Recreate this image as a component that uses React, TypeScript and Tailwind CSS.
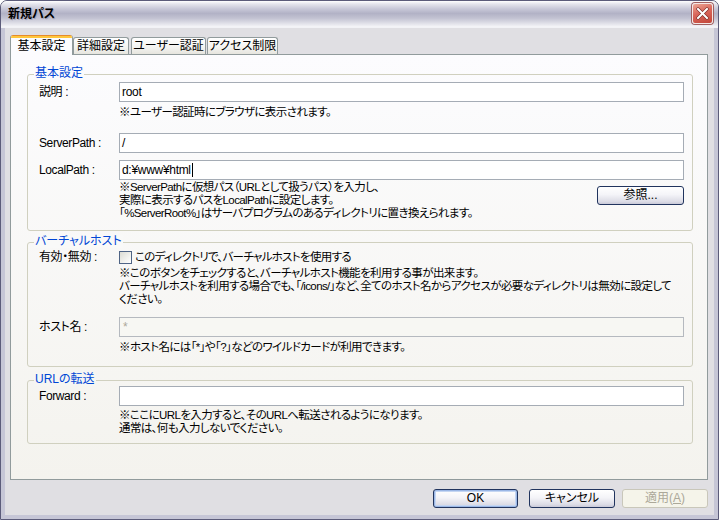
import React from "react";

const font =
  "font-['Liberation_Sans','Noto_Sans_CJK_JP',sans-serif] [font-feature-settings:'palt']";

function CloseButton() {
  return (
    <div className="flex h-[21px] w-[21px] items-center justify-center rounded-[3px] border border-[#f4e8e6] bg-[linear-gradient(160deg,#eba896_0%,#d9665a_45%,#c2463a_100%)] shadow-[0_0_0_1px_#a06060]">
      <svg width="13" height="13" viewBox="0 0 13 13">
        <path d="M2 2 L11 11 M11 2 L2 11" stroke="#7a2a24" strokeWidth="3.2" strokeLinecap="square" />
        <path d="M2 2 L11 11 M11 2 L2 11" stroke="#ffffff" strokeWidth="2" strokeLinecap="square" />
      </svg>
    </div>
  );
}

function Tab({ label, selected, width }: { label: string; selected?: boolean; width: string }) {
  if (selected) {
    return (
      <div
        className={`relative z-10 mb-[-1px] flex h-[20px] ${width} flex-col overflow-hidden rounded-t-[3px] border-x border-[#919b9c] bg-[#fcfcfe]`}
      >
        <div className="h-[1px] bg-[#e68b2c]" />
        <div className="h-[2px] bg-[#ffc73c]" />
        <div className="flex flex-1 items-center justify-center pb-[1px] text-[12px]">{label}</div>
      </div>
    );
  }
  return (
    <div
      className={`flex h-[17px] ${width} items-center justify-center rounded-t-[3px] border-x border-t border-[#919b9c] bg-[linear-gradient(180deg,#ffffff_0%,#f3f3f0_60%,#e6e5de_100%)] text-[12px]`}
    >
      {label}
    </div>
  );
}

function Group({
  title,
  labelBg,
  className,
  children,
}: {
  title: string;
  labelBg: string;
  className: string;
  children: React.ReactNode;
}) {
  return (
    <div className={`relative rounded-[3px] border border-[#d0d0bf] pl-[11px] pr-[8px] ${className}`}>
      <span className={`absolute left-[6px] top-[-8px] px-[1px] leading-[13px] text-[#0046d5] ${labelBg}`}>
        {title}
      </span>
      {children}
    </div>
  );
}

function Row({ label, children, className = "" }: { label: string; children: React.ReactNode; className?: string }) {
  return (
    <div className={`flex items-center ${className}`}>
      <div className="w-[80px] shrink-0 whitespace-nowrap tracking-[-0.4px]">{label}</div>
      <div className="flex-1">{children}</div>
    </div>
  );
}

function TextBox({ value, cursor }: { value: string; cursor?: boolean }) {
  return (
    <div className="flex h-[20px] items-center border border-[#a5acb5] bg-white pl-[2px] tracking-[-0.3px]">
      <span>{value}</span>
      {cursor && <span className="ml-[1px] inline-block h-[14px] w-[1px] bg-black" />}
    </div>
  );
}

function Note({ lines, className = "" }: { lines: string[]; className?: string }) {
  return (
    <div className={`ml-[80px] whitespace-nowrap text-[11.5px] leading-[13px] tracking-[-0.6px] ${className}`}>
      {lines.map((l) => (
        <div key={l}>{l}</div>
      ))}
    </div>
  );
}

function XpButton({
  label,
  width,
  isDefault,
  disabled,
  className = "",
}: {
  label: React.ReactNode;
  width: string;
  isDefault?: boolean;
  disabled?: boolean;
  className?: string;
}) {
  if (disabled) {
    return (
      <div
        className={`flex h-[19px] ${width} items-center justify-center rounded-[3px] border border-[#c9c7ba] bg-[#f5f4ea] text-[#aca899] ${className}`}
      >
        {label}
      </div>
    );
  }
  return (
    <div
      className={`flex h-[19px] ${width} items-center justify-center rounded-[3px] border border-[#21345e] bg-[linear-gradient(180deg,#ffffff_0%,#f4f4f8_45%,#dcdce6_85%,#c9c9d8_100%)] ${
        isDefault ? "shadow-[inset_0_0_0_1px_#9bb7e6,inset_0_0_0_2px_#c5d6f2]" : ""
      } ${className}`}
    >
      {label}
    </div>
  );
}

export default function App() {
  return (
    <div className="h-[520px] w-[719px] bg-white">
      <div
        className={`flex h-full w-full flex-col overflow-hidden rounded-t-[7px] border border-[#5c5c7a] bg-[#e0dfe3] text-[12px] leading-[13px] text-black ${font}`}
      >
        {/* title bar */}
        <div className="flex h-[27px] shrink-0 items-center justify-between border-b border-[#f2f2f6] bg-[linear-gradient(180deg,#ffffff_0%,#e4e4ec_12%,#c8c8d8_30%,#b2b2c6_48%,#c2c2d2_66%,#e0e0e8_86%,#f6f6f9_100%)] pl-[7px] pr-[5px]">
          <span className="text-[12px] font-bold [text-shadow:1px_1px_0_#a6a6ba]">新規パス</span>
          <div className="mt-[-2px]">
            <CloseButton />
          </div>
        </div>

        {/* body */}
        <div className="flex flex-1 flex-col border-x-[4px] border-b-[4px] border-[#c6c6d6] pl-[5px] pr-[6px] pt-[7px]">
          {/* tabs */}
          <div className="flex h-[19px] items-end">
            <Tab label="基本設定" selected width="w-[63px]" />
            <Tab label="詳細設定" width="w-[56px]" />
            <Tab label="ユーザー認証" width="w-[75px] ml-[2px]" />
            <Tab label="アクセス制限" width="w-[71px] ml-[1px]" />
          </div>

          {/* panel */}
          <div className="flex h-[426px] flex-col border border-[#919b9c] bg-[linear-gradient(180deg,#fcfcfe_0%,#f4f3ee_100%)] pl-[16px] pr-[14px] pt-[19px]">
            <Group title="基本設定" labelBg="bg-[#fbfbfc]" className="pb-[10px] pt-[7px]">
              <Row label="説明 :">
                <TextBox value="root" />
              </Row>
              <Note className="mt-[4px]" lines={["※ユーザー認証時にブラウザに表示されます。"]} />
              <Row label="ServerPath :" className="mt-[14px]">
                <TextBox value="/" />
              </Row>
              <Row label="LocalPath :" className="mt-[7px]">
                <TextBox value="d:¥www¥html" cursor />
              </Row>
              <div className="mt-[1px] flex items-start justify-between">
                <Note
                  lines={[
                    "※ServerPathに仮想パス（URLとして扱うパス）を入力し、",
                    "実際に表示するパスをLocalPathに設定します。",
                    "「%ServerRoot%」はサーバプログラムのあるディレクトリに置き換えられます。",
                  ]}
                />
                <XpButton label="参照..." width="w-[87px]" className="mt-[5px]" />
              </div>
            </Group>

            <Group title="バーチャルホスト" labelBg="bg-[#f9f9f8]" className="mt-[11px] pb-[12px] pt-[8px]">
              <Row label="有効・無効 :" className="h-[13px]">
                <div className="flex items-center">
                  <div className="h-[13px] w-[13px] shrink-0 border border-[#4f6485] bg-[linear-gradient(135deg,#dcdcd4_0%,#f2f2ee_60%,#ffffff_100%)]" />
                  <span className="ml-[3px] text-[11.5px] tracking-[-0.7px]">
                    このディレクトリで、バーチャルホストを使用する
                  </span>
                </div>
              </Row>
              <Note
                className="mt-[3px]"
                lines={[
                  "※このボタンをチェックすると、バーチャルホスト機能を利用する事が出来ます。",
                  "バーチャルホストを利用する場合でも、「/icons/」など、全てのホスト名からアクセスが必要なディレクトリは無効に設定して",
                  "ください。",
                ]}
              />
              <Row label="ホスト名 :" className="mt-[11px]">
                <div className="flex h-[20px] items-center border border-[#b5b9bf] bg-[#f7f7f3] pl-[3px] text-[#aca899]">
                  *
                </div>
              </Row>
              <Note className="mt-[4px]" lines={["※ホスト名には「*」や「?」などのワイルドカードが利用できます。"]} />
            </Group>

            <Group title="URLの転送" labelBg="bg-[#f6f6f3]" className="mt-[13px] pb-[8px] pt-[5px]">
              <Row label="Forward :">
                <TextBox value="" />
              </Row>
              <Note
                className="mt-[3px]"
                lines={["※ここにURLを入力すると、そのURLへ転送されるようになります。", "通常は、何も入力しないでください。"]}
              />
            </Group>
          </div>

          {/* buttons */}
          <div className="mt-[9px] flex justify-end">
            <XpButton label="OK" width="w-[85px]" isDefault />
            <XpButton label="キャンセル" width="w-[86px]" className="ml-[11px]" />
            <XpButton
              label={
                <span>
                  適用(<span className="underline">A</span>)
                </span>
              }
              width="w-[86px]"
              disabled
              className="ml-[7px]"
            />
          </div>
        </div>
      </div>
    </div>
  );
}
